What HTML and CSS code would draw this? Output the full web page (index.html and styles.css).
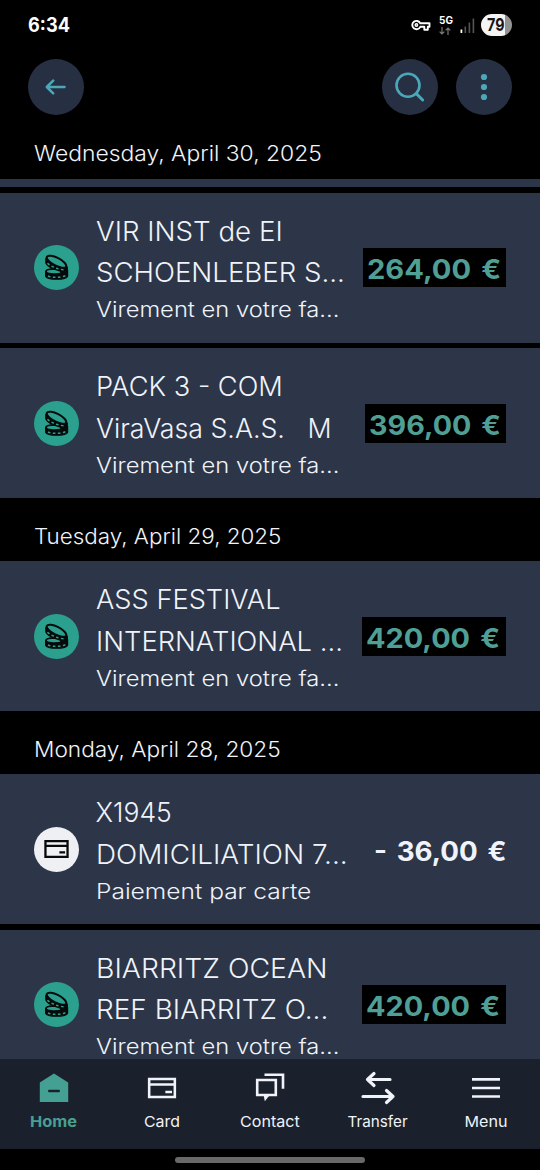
FILE: index.html
```html
<!DOCTYPE html>
<html lang="en">
<head>
<meta charset="utf-8">
<title>Transactions</title>
<link rel="stylesheet" href="styles.css">
</head>
<body>
<svg class="defs" width="0" height="0">
  <symbol id="coins" viewBox="0 0 45 45">
    <g fill="none" stroke="#050b0b" stroke-width="2">
      <path fill="#050b0b" stroke-width="1.200" stroke-linejoin="round" d="M11.800 13.500v4.300c1.500 4.500 12 9.200 21.500 8.700v-4.500l-10-2z"/>
      <path fill="#050b0b" stroke-width="1.200" d="M11.600 26.500v4.700c1.500 4 20.500 4 22 0v-5.500z"/>
      <ellipse cx="22.500" cy="16.700" rx="10.800" ry="3.900" transform="rotate(27 22.500 16.700)" fill="#2ca08e"/>
      <path d="M20.500 23.800c-5 0-8.500 1-8.500 2.600 0 2.500 9 3.400 15.500 1.900l-1-2.300z" fill="#2ca08e" stroke-width="1.800"/>
    </g>
    <path d="M13.500 18.200c4 4 10.500 6 17 6.700M14 31c4 1.800 13 1.800 18-.5" fill="none" stroke="#2ca08e" stroke-width="1.500" stroke-dasharray="2.600 2.400"/>
  </symbol>
  <symbol id="card" viewBox="0 0 30 22">
    <path d="M1.500 1.500h27v19h-27zM1.500 7.300h27M18.500 15.200h7" fill="none" stroke="currentColor" stroke-width="2.800"/>
  </symbol>
</svg>
<div class="phone">
  <header class="status">
    <span class="clock fit" data-w="42">6:34</span>
    <div class="indicators">
      <svg class="key" width="20" height="13" viewBox="0 0 20 13" fill="none" stroke="#fff" stroke-width="1.900" stroke-linejoin="round"><path d="M9.300 4.300h9.200v3.500h-1.700v3h-3.500v-3h-4a4.200 4.200 0 1 1 0-3.500z"/><circle cx="5.400" cy="6" r="1.200" stroke-width="1.500"/></svg>
      <div class="net"><span class="fit" data-w="13">5G</span><svg width="12" height="8" viewBox="0 0 12 8" fill="none" stroke="#777" stroke-width="1.200"><path d="M3 0v7M.6 4.600 3 7l2.400-2.400M9 8V1M6.600 3.400 9 1l2.400 2.400"/></svg></div>
      <svg class="bars" width="15" height="15" viewBox="0 0 15 15"><path fill="#fff" d="M.5 11.500h1.800V15H.5z"/><path fill="#555" d="M4.500 8.500h1.600V15H4.500zM8.600 4.500h1.600V15H8.600zM12.600.5h1.600V15h-1.600z"/></svg>
      <div class="battery"><span class="fit" data-w="17.5">79</span></div>
    </div>
  </header>
  <nav class="toolbar">
    <button class="round"><svg width="56" height="56" viewBox="0 0 56 56"><path d="M36.500 28H19M25.200 21.700 18.800 28l6.400 6.300" stroke-width="2.500"/></svg></button>
    <span class="spacer"></span>
    <button class="round"><svg width="56" height="56" viewBox="0 0 56 56"><circle cx="26" cy="26.300" r="11.500" stroke-width="2.600"/><path d="m34.300 34.600 6.400 6.400" stroke-width="2.900"/></svg></button>
    <button class="round"><svg width="56" height="56" viewBox="0 0 56 56"><g class="dots"><circle cx="28" cy="18" r="3.100"/><circle cx="28" cy="28" r="3.100"/><circle cx="28" cy="38" r="3.100"/></g></svg></button>
  </nav>
  <main class="list">
    <h2 class="date first"><span class="fit" data-w="287.5">Wednesday, April 30, 2025</span></h2>
    <div class="sliver"></div>
    <article class="row">
      <span class="badge"><svg width="45" height="45"><use href="#coins"/></svg></span>
      <div class="info"><p><span class="fit" data-w="187">VIR INST de EI</span></p><p><span class="fit" data-w="249">SCHOENLEBER S...</span></p><small><span class="fit" data-w="243">Virement en votre fa...</span></small></div>
      <b class="amount credit" style="width:143px"><span class="fit" data-w="134">264,00 €</span></b>
    </article>
    <article class="row">
      <span class="badge"><svg width="45" height="45"><use href="#coins"/></svg></span>
      <div class="info"><p><span class="fit" data-w="187">PACK 3 - COM</span></p><p><span class="fit" data-w="236">ViraVasa S.A.S.   M</span></p><small><span class="fit" data-w="243">Virement en votre fa...</span></small></div>
      <b class="amount credit" style="width:141px"><span class="fit" data-w="132">396,00 €</span></b>
    </article>
    <h2 class="date"><span class="fit" data-w="247.5">Tuesday, April 29, 2025</span></h2>
    <article class="row">
      <span class="badge"><svg width="45" height="45"><use href="#coins"/></svg></span>
      <div class="info"><p><span class="fit" data-w="185">ASS FESTIVAL</span></p><p><span class="fit" data-w="247">INTERNATIONAL ...</span></p><small><span class="fit" data-w="243">Virement en votre fa...</span></small></div>
      <b class="amount credit" style="width:144px"><span class="fit" data-w="134">420,00 €</span></b>
    </article>
    <h2 class="date"><span class="fit" data-w="247">Monday, April 28, 2025</span></h2>
    <article class="row">
      <span class="badge light"><svg width="25" height="18"><use href="#card"/></svg></span>
      <div class="info"><p><span class="fit" data-w="76">X1945</span></p><p><span class="fit" data-w="251.5">DOMICILIATION 7...</span></p><small><span class="fit" data-w="215">Paiement par carte</span></small></div>
      <b class="amount" style="width:132px"><span class="fit" data-w="132">- 36,00 €</span></b>
    </article>
    <article class="row">
      <span class="badge"><svg width="45" height="45"><use href="#coins"/></svg></span>
      <div class="info"><p><span class="fit" data-w="231">BIARRITZ OCEAN</span></p><p><span class="fit" data-w="232">REF BIARRITZ O...</span></p><small><span class="fit" data-w="243">Virement en votre fa...</span></small></div>
      <b class="amount credit" style="width:144px"><span class="fit" data-w="134">420,00 €</span></b>
    </article>
  </main>
  <nav class="tabs">
    <a class="tab active"><svg width="36" height="36" viewBox="0 0 36 36"><path fill="#43a093" d="M18 3.500 32.200 12.500V32H3.800V12.500z"/><path d="M13.200 21h9.600" stroke="#1b212c" stroke-width="2.400" stroke-linecap="round"/></svg><span class="fit" data-w="47">Home</span></a>
    <a class="tab"><svg width="36" height="36" viewBox="0 0 36 36"><use href="#card" x="3.500" y="7.500" width="29" height="21"/></svg><span class="fit" data-w="36">Card</span></a>
    <a class="tab"><svg width="36" height="36" viewBox="0 0 36 36" fill="none" stroke="currentColor" stroke-width="2.600"><path d="M5.200 10h18.600v15H5.200z"/><path d="M12.500 4.700H31v14"/><path d="M11.600 25h6.200l-5 6.300z" fill="currentColor" stroke="none"/></svg><span class="fit" data-w="60">Contact</span></a>
    <a class="tab"><svg width="36" height="36" viewBox="0 0 36 36" fill="none" stroke="currentColor" stroke-width="3.200" stroke-linecap="round" stroke-linejoin="round"><path d="M30 9.500H8M14 3.500l-6.500 6L14 15.500M3 26.500h30M26.500 20.500l6.500 6-6.500 6"/></svg><span class="fit" data-w="60">Transfer</span></a>
    <a class="tab"><svg width="36" height="36" viewBox="0 0 36 36" stroke="currentColor" stroke-width="2.600"><path d="M4 9.400h28M4 18h28M4 26.500h28"/></svg><span class="fit" data-w="43">Menu</span></a>
  </nav>
  <footer class="gesture"><i></i></footer>
</div>
<script src="fit.js"></script>
</body>
</html>
```
FILE: styles.css
```css
* { box-sizing: border-box; }
body { margin: 0; background: #000; color: #f0f3fa; font-family: Inter, "Open Sans", sans-serif; }
p, h2 { margin: 0; }
.defs { position: absolute; }
.phone { width: 540px; height: 1170px; display: flex; flex-direction: column; overflow: hidden; }
.fit { display: inline-block; white-space: pre; transform-origin: left center; }
.status { height: 50px; flex: none; display: flex; justify-content: space-between; padding: 0 28px; color: #fff; }
.clock { font-size: 19.5px; font-weight: 700; line-height: 50px; }
.indicators { display: flex; align-items: center; }
.key { margin-right: 8px; }
.net { width: 13px; height: 20px; display: flex; flex-direction: column; font-size: 10px; line-height: 11px; font-weight: 700; margin-right: 8px; }
.net svg { margin-top: 1px; flex: none; }
.bars { margin-right: 6px; }
.battery { width: 31px; height: 22px; border-radius: 11px; background: linear-gradient(90deg, #f4f4f4 79%, #929292 79%); color: #151515; font-size: 18px; font-weight: 700; line-height: 22px; padding-left: 6px; }
.toolbar { height: 74px; flex: none; display: flex; padding: 9px 28px 0; }
.spacer { flex: 1; }
.round { width: 56px; height: 56px; padding: 0; border: 0; border-radius: 50%; background: #273042; }
.round + .round { margin-left: 18px; }
.round svg { display: block; fill: none; stroke: #4ba8b9; stroke-linecap: round; stroke-linejoin: round; }
.round .dots { fill: #4ba8b9; stroke: none; }
.list { height: 935px; flex: none; overflow: hidden; }
.date { height: 63px; padding: 16px 34px 0; font-size: 21px; line-height: 46px; font-weight: 300; }
.date.first { height: 55px; padding-top: 7px; }
.sliver { height: 8px; background: #2c3648; margin-bottom: 5.500px; }
.row { height: 150px; display: flex; background: #2c3648; padding: 0 34px; }
.row + .row { margin-top: 5.500px; }
.badge { flex: none; width: 45px; height: 45px; margin-top: 52.500px; border-radius: 50%; background: #2ca08e; display: grid; place-items: center; color: #080808; }
.badge.light { background: #eff0f4; }
.info { flex: 1; min-width: 0; margin-left: 16.500px; padding-top: 18.300px; font-weight: 300; }
.info p { height: 41.500px; font-size: 26.500px; line-height: 41.500px; }
.info small { display: block; margin-top: 1.500px; font-size: 21px; line-height: 30px; }
.amount { flex: none; height: 39px; margin-top: 55.500px; font-size: 26.500px; line-height: 42px; font-weight: 700; word-spacing: 3px; }
.credit { padding-left: 4px; background: #000; color: #4f9f94; }
.tabs { height: 90px; flex: none; display: grid; grid-template-columns: repeat(5, 1fr); background: #1b212c; }
.tab { display: flex; flex-direction: column; align-items: center; padding-top: 11px; font-size: 15px; line-height: 24px; }
.tab svg { display: block; flex: none; margin-bottom: 4px; }
.tab .fit { transform-origin: center; }
.tab.active { color: #4a9f93; font-weight: 700; }
.gesture { flex: 1; display: flex; justify-content: center; padding-top: 8px; }
.gesture i { width: 190px; height: 6px; border-radius: 3px; background: #696969; }
```
FILE: fit.js
```js
// Stretch each label horizontally to its intended width.
document.fonts.ready.then(() => {
  document.querySelectorAll(".fit").forEach((el) => {
    el.style.transform = `scaleX(${Number(el.dataset.w) / el.offsetWidth})`;
  });
});
```
